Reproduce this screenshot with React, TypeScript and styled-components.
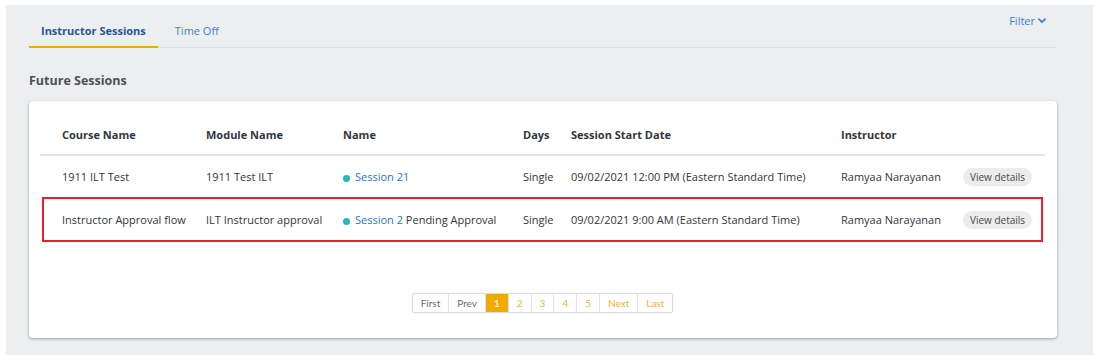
import styled, { createGlobalStyle } from "styled-components";

const GlobalStyle = createGlobalStyle`
  html, body {
    margin: 0;
    padding: 0;
    background: #ffffff;
  }
  body {
    font-family: "Open Sans", "Noto Sans", sans-serif;
    color: #32363a;
  }
`;

type Session = {
  course: string;
  module: string;
  name: string;
  status?: string;
  days: string;
  start: string;
  instructor: string;
  highlighted?: boolean;
};

const sessions: Session[] = [
  {
    course: "1911 ILT Test",
    module: "1911 Test ILT",
    name: "Session 21",
    days: "Single",
    start: "09/02/2021 12:00 PM (Eastern Standard Time)",
    instructor: "Ramyaa Narayanan",
  },
  {
    course: "Instructor Approval flow",
    module: "ILT Instructor approval",
    name: "Session 2",
    status: "Pending Approval",
    days: "Single",
    start: "09/02/2021 9:00 AM (Eastern Standard Time)",
    instructor: "Ramyaa Narayanan",
    highlighted: true,
  },
];

const pages = ["First", "Prev", "1", "2", "3", "4", "5", "Next", "Last"];

export default function App() {
  return (
    <>
      <GlobalStyle />
      <Page>
        <Panel>
          <TabBar>
            <Tabs>
              <Tab $active>Instructor Sessions</Tab>
              <Tab>Time Off</Tab>
            </Tabs>
            <FilterButton>
              Filter
              <svg width="8" height="6" viewBox="0 0 8 6">
                <path
                  d="M1 1.2 L4 4.2 L7 1.2"
                  fill="none"
                  stroke="#3b7fd4"
                  strokeWidth="1.8"
                  strokeLinecap="round"
                  strokeLinejoin="round"
                />
              </svg>
            </FilterButton>
          </TabBar>

          <SectionTitle>Future Sessions</SectionTitle>

          <Card>
            <HeaderRow>
              <span>Course Name</span>
              <span>Module Name</span>
              <span>Name</span>
              <span>Days</span>
              <span>Session Start Date</span>
              <span>Instructor</span>
              <span />
            </HeaderRow>
            {sessions.map((s) => (
              <Row key={s.name} $highlighted={s.highlighted}>
                <span>{s.course}</span>
                <span>{s.module}</span>
                <NameCell>
                  <Dot />
                  <SessionLink>{s.name}</SessionLink>
                  {s.status && <span>&nbsp;{s.status}</span>}
                </NameCell>
                <span>{s.days}</span>
                <span>{s.start}</span>
                <span>{s.instructor}</span>
                <span>
                  <DetailsButton>View details</DetailsButton>
                </span>
              </Row>
            ))}

            <Pagination>
              {pages.map((p) => (
                <PageItem
                  key={p}
                  $active={p === "1"}
                  $muted={p === "First" || p === "Prev"}
                >
                  {p}
                </PageItem>
              ))}
            </Pagination>
          </Card>
        </Panel>
      </Page>
    </>
  );
}

const Page = styled.div`
  padding: 5px 6px 5px 6px;
  height: 360px;
  box-sizing: border-box;
`;

const Panel = styled.div`
  background: #edeef0;
  height: 350px;
  padding: 0 36px 0 23px;
  box-sizing: border-box;
  display: flex;
  flex-direction: column;
`;

const TabBar = styled.div`
  display: flex;
  justify-content: space-between;
  align-items: flex-start;
  border-bottom: 1px solid #e1e2e4;
  height: 42px;
`;

const Tabs = styled.div`
  display: flex;
  gap: 5px;
  height: 100%;
`;

const Tab = styled.div<{ $active?: boolean }>`
  display: flex;
  align-items: center;
  padding: 9px 12px 0;
  font-size: 11px;
  font-weight: ${(p) => (p.$active ? 700 : 400)};
  color: ${(p) => (p.$active ? "#27559b" : "#3b7fd4")};
  border-bottom: 2px solid ${(p) => (p.$active ? "#f0ab00" : "transparent")};
  margin-bottom: -1px;
`;

const FilterButton = styled.div`
  display: flex;
  align-items: center;
  gap: 3px;
  padding: 8px 11px 0 0;
  font-size: 11px;
  color: #3b7fd4;
`;

const SectionTitle = styled.h2`
  margin: 24px 0 0;
  font-size: 12.5px;
  font-weight: 700;
  color: #4f5153;
  line-height: 18px;
`;

const Card = styled.div`
  margin-top: 11px;
  background: #ffffff;
  border-radius: 4px;
  box-shadow: 0 1px 3px rgba(0, 0, 0, 0.35);
  padding: 13px 12px 25px 11px;
  display: flex;
  flex-direction: column;
`;

const columns = "144px 137px 180px 48px 270px 122px 1fr";

const HeaderRow = styled.div`
  display: grid;
  grid-template-columns: ${columns};
  align-items: center;
  height: 40px;
  padding-left: 22px;
  border-bottom: 2px solid #e5e5e5;
  font-size: 11px;
  font-weight: 700;
  color: #32363a;
`;

const Row = styled.div<{ $highlighted?: boolean }>`
  display: grid;
  grid-template-columns: ${columns};
  align-items: center;
  height: 41px;
  font-size: 11px;
  color: #32363a;
  padding-left: ${(p) => (p.$highlighted ? "18px" : "22px")};
  margin: ${(p) => (p.$highlighted ? "0 2px" : "0")};
  border: ${(p) => (p.$highlighted ? "2px solid #e8202e" : "none")};
  white-space: nowrap;
`;

const NameCell = styled.span`
  display: flex;
  align-items: center;
`;

const Dot = styled.span`
  width: 7px;
  height: 7px;
  border-radius: 50%;
  background: #24b7c3;
  margin: 3px 5px 0 0;
`;

const SessionLink = styled.span`
  color: #2c72c7;
`;

const DetailsButton = styled.span`
  display: inline-block;
  background: #ececec;
  border-radius: 9px;
  padding: 2px 7px;
  font-size: 10px;
  line-height: 14px;
  color: #4a4a4a;
`;

const Pagination = styled.div`
  display: flex;
  align-self: center;
  margin-top: 51px;
  border: 1px solid #dddddd;
  border-radius: 2px;
  box-shadow: 0 0 2px rgba(0, 0, 0, 0.08);
`;

const PageItem = styled.span<{ $active?: boolean; $muted?: boolean }>`
  font-family: Lato, "Open Sans", sans-serif;
  font-size: 10px;
  line-height: 18px;
  padding: 0 8px;
  border-left: 1px solid #e3e3e3;
  background: ${(p) => (p.$active ? "#f0ab00" : "#ffffff")};
  color: ${(p) => (p.$active ? "#ffffff" : p.$muted ? "#6a6d70" : "#f2b233")};
  &:first-child {
    border-left: none;
  }
`;
